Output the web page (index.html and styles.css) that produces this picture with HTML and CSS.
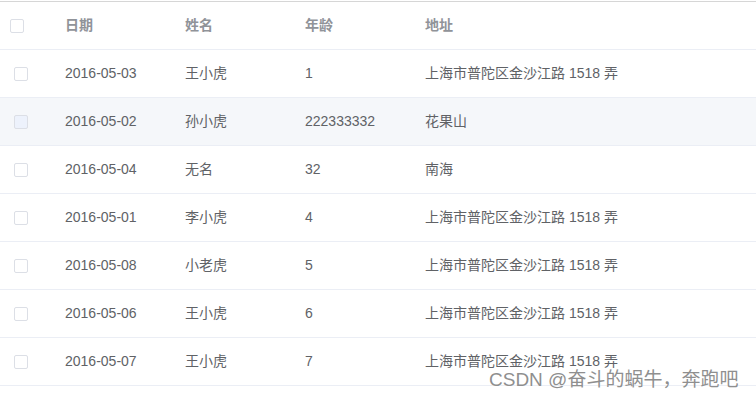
FILE: index.html
```html
<!DOCTYPE html>
<html>
<head>
<meta charset="utf-8">
<link rel="stylesheet" href="styles.css">
</head>
<body>
<div class="page">
  <div class="table">
    <div class="row head">
      <div class="cell sel"><span class="cb head-cb"></span></div>
      <div class="cell">日期</div>
      <div class="cell">姓名</div>
      <div class="cell">年龄</div>
      <div class="cell">地址</div>
    </div>
    <div class="row">
      <div class="cell sel"><span class="cb"></span></div>
      <div class="cell">2016-05-03</div>
      <div class="cell">王小虎</div>
      <div class="cell">1</div>
      <div class="cell">上海市普陀区金沙江路 1518 弄</div>
    </div>
    <div class="row hover">
      <div class="cell sel"><span class="cb disabled"></span></div>
      <div class="cell">2016-05-02</div>
      <div class="cell">孙小虎</div>
      <div class="cell">222333332</div>
      <div class="cell">花果山</div>
    </div>
    <div class="row">
      <div class="cell sel"><span class="cb"></span></div>
      <div class="cell">2016-05-04</div>
      <div class="cell">无名</div>
      <div class="cell">32</div>
      <div class="cell">南海</div>
    </div>
    <div class="row">
      <div class="cell sel"><span class="cb"></span></div>
      <div class="cell">2016-05-01</div>
      <div class="cell">李小虎</div>
      <div class="cell">4</div>
      <div class="cell">上海市普陀区金沙江路 1518 弄</div>
    </div>
    <div class="row">
      <div class="cell sel"><span class="cb"></span></div>
      <div class="cell">2016-05-08</div>
      <div class="cell">小老虎</div>
      <div class="cell">5</div>
      <div class="cell">上海市普陀区金沙江路 1518 弄</div>
    </div>
    <div class="row">
      <div class="cell sel"><span class="cb"></span></div>
      <div class="cell">2016-05-06</div>
      <div class="cell">王小虎</div>
      <div class="cell">6</div>
      <div class="cell">上海市普陀区金沙江路 1518 弄</div>
    </div>
    <div class="row">
      <div class="cell sel"><span class="cb"></span></div>
      <div class="cell">2016-05-07</div>
      <div class="cell">王小虎</div>
      <div class="cell">7</div>
      <div class="cell">上海市普陀区金沙江路 1518 弄</div>
    </div>
  </div>
  <div class="watermark">CSDN @奋斗的蜗牛，奔跑吧</div>
</div>
</body>
</html>
```

FILE: styles.css
```css
html, body {
  margin: 0;
  padding: 0;
  background: #fff;
}
.page {
  position: relative;
  width: 756px;
  height: 399px;
  overflow: hidden;
  font-family: "Liberation Sans", "Noto Sans CJK SC", sans-serif;
  font-size: 14px;
  color: #606266;
}
.table {
  margin-top: 1px;
  border-top: 1px solid #d6d6d6;
}
.row {
  display: grid;
  grid-template-columns: 55px 120px 120px 120px 1fr;
  height: 47px;
  border-bottom: 1px solid #ebeef5;
  align-items: center;
}
.row.hover {
  background: #f5f7fa;
}
.head {
  color: #909399;
  font-weight: bold;
}
.cell {
  padding-left: 10px;
  white-space: nowrap;
  line-height: 23px;
}
.cell.sel {
  padding-left: 14px;
  display: flex;
  align-items: center;
}
.head .cell.sel {
  padding-left: 10px;
}
.cb {
  display: block;
  box-sizing: border-box;
  width: 14px;
  height: 14px;
  border: 1px solid #dcdfe6;
  border-radius: 2px;
  background: #fff;
}
.cb.disabled {
  background: #edf2fc;
}
.watermark {
  position: absolute;
  left: 489px;
  top: 369px;
  font-size: 19px;
  line-height: 22px;
  color: #8f8f8f;
  white-space: nowrap;
  text-shadow: 0 0 1px #fff;
}
```
